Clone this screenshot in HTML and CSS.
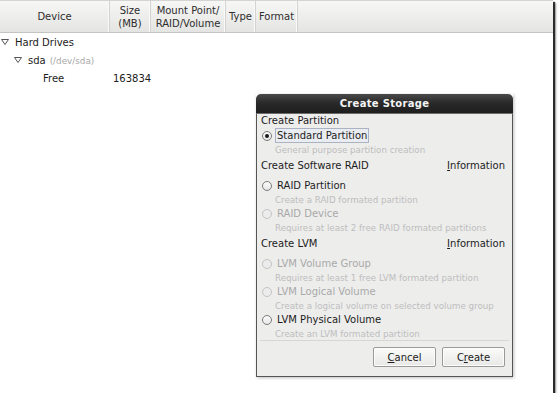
FILE: index.html
```html
<!DOCTYPE html>
<html lang="en">
<head>
    <meta charset="UTF-8">
    <title>Create Storage</title>
    <link rel="stylesheet" href="styles.css">
</head>
<body>
    <div class="frame">
        <div class="header">
            <div class="col col-device">Device</div>
            <div class="col col-size">Size<br>(MB)</div>
            <div class="col col-mount">Mount Point/<br>RAID/Volume</div>
            <div class="col col-type">Type</div>
            <div class="col col-format">Format</div>
            <div class="col col-rest"></div>
        </div>

        <div class="tree">
            <div class="row level-0">
                <svg class="expander" width="8" height="6" viewBox="0 0 8 6"><path d="M0.5 0.5 H7.5 L4 5.5 Z" fill="none" stroke="#555" stroke-width="1"/></svg>
                <span>Hard Drives</span>
            </div>
            <div class="row level-1">
                <svg class="expander" width="8" height="6" viewBox="0 0 8 6"><path d="M0.5 0.5 H7.5 L4 5.5 Z" fill="none" stroke="#555" stroke-width="1"/></svg>
                <span>sda</span>
                <span class="path">(/dev/sda)</span>
            </div>
            <div class="row level-2">
                <span class="cell-name">Free</span>
                <span class="cell-size">163834</span>
            </div>
        </div>

        <div class="dialog">
            <div class="titlebar">Create Storage</div>
            <div class="dialog-body">
                <div class="options">
                    <div class="heading first">Create Partition</div>
                    <div class="option first">
                        <span class="radio checked"></span>
                        <span class="label focused">Standard Partition</span>
                    </div>
                    <div class="desc">General purpose partition creation</div>

                    <div class="heading">
                        <span>Create Software RAID</span>
                        <span class="info"><u>I</u>nformation</span>
                    </div>
                    <div class="option">
                        <span class="radio"></span>
                        <span class="label">RAID Partition</span>
                    </div>
                    <div class="desc">Create a RAID formated partition</div>
                    <div class="option disabled">
                        <span class="radio"></span>
                        <span class="label">RAID Device</span>
                    </div>
                    <div class="desc">Requires at least 2 free RAID formated partitions</div>

                    <div class="heading">
                        <span>Create LVM</span>
                        <span class="info"><u>I</u>nformation</span>
                    </div>
                    <div class="option disabled">
                        <span class="radio"></span>
                        <span class="label">LVM Volume Group</span>
                    </div>
                    <div class="desc">Requires at least 1 free LVM formated partition</div>
                    <div class="option disabled">
                        <span class="radio"></span>
                        <span class="label">LVM Logical Volume</span>
                    </div>
                    <div class="desc">Create a logical volume on selected volume group</div>
                    <div class="option">
                        <span class="radio"></span>
                        <span class="label">LVM Physical Volume</span>
                    </div>
                    <div class="desc">Create an LVM formated partition</div>
                </div>

                <div class="buttons">
                    <button class="btn"><u>C</u>ancel</button>
                    <button class="btn">C<u>r</u>eate</button>
                </div>
            </div>
        </div>
    </div>
</body>
</html>
```

FILE: styles.css
```css
* {
    margin: 0;
    padding: 0;
    box-sizing: border-box;
}

body {
    font-family: 'DejaVu Sans', 'Liberation Sans', sans-serif;
    font-size: 10px;
    color: #1c1c1c;
    background: white;
}

.frame {
    position: relative;
    width: 553px;
    height: 393px;
    background: white;
    border-top: 1px solid #d4d4d4;
    box-shadow: 2px 2px 1px rgba(0,0,0,0.75), 3px 3px 2px rgba(0,0,0,0.35);
}

/* column header */

.header {
    display: flex;
    height: 32px;
    background: linear-gradient(#f7f7f5, #e4e4e2);
    border-bottom: 1px solid #c4c4c2;
}

.col {
    display: flex;
    align-items: center;
    justify-content: center;
    text-align: center;
    line-height: 13px;
    color: #2e2e2e;
    border-right: 1px solid #d2d2d0;
    box-shadow: inset -1px 0 0 #fafafa;
}

.col-device { width: 110px; }
.col-size { width: 41px; }
.col-mount { width: 75px; }
.col-type { width: 30px; }
.col-format { width: 42px; }
.col-rest { flex: 1; border-right: none; box-shadow: none; }

/* tree */

.row {
    display: flex;
    align-items: center;
    height: 18px;
    white-space: nowrap;
}

.expander {
    margin-right: 6px;
}

.level-0 { padding-left: 1px; }
.level-1 { padding-left: 14px; }
.level-1 .path {
    margin-left: 4px;
    font-size: 8.8px;
    color: #a8a8a8;
    padding-top: 2px;
}

.level-2 { padding-left: 43px; }
.cell-name { width: 70px; }

/* dialog */

.dialog {
    position: absolute;
    left: 256px;
    top: 93px;
    width: 257px;
    box-shadow: 1px 1px 3px rgba(0,0,0,0.25);
}

.titlebar {
    height: 20px;
    line-height: 20px;
    text-align: center;
    font-weight: bold;
    color: #f4f4f4;
    letter-spacing: 0.3px;
    background: linear-gradient(#4a4a4a, #2a2a2a 45%, #1e1e1e);
    border-radius: 5px 5px 0 0;
    border-bottom: 1px solid #6a6a6a;
}

.dialog-body {
    background: #ededec;
    border: 1px solid #555;
    border-top: none;
    padding: 0 0 9px;
}

.options {
    margin: 0 3px;
    padding: 0 4px 0 1px;
    border-bottom: 1px solid #d6d6d4;
}

.heading {
    display: flex;
    justify-content: space-between;
    line-height: 14px;
    margin-top: 3px;
}

.heading.first {
    margin-top: 0;
}

.option {
    display: flex;
    align-items: center;
    height: 15px;
    margin-top: 5px;
}

.option.first,
.desc + .option {
    margin-top: 0;
}

.radio {
    width: 10px;
    height: 10px;
    margin-left: 1px;
    border: 1px solid #7c7c7c;
    border-radius: 50%;
    background: linear-gradient(#fbfbfb, #e6e6e6);
    display: flex;
    align-items: center;
    justify-content: center;
}

.radio.checked::after {
    content: "";
    width: 4px;
    height: 4px;
    border-radius: 50%;
    background: #1a1a1a;
}

.label {
    margin-left: 3px;
    padding: 0 1px;
    line-height: 13px;
    border: 1px solid transparent;
}

.label.focused {
    border-color: #aab2c4;
    background: #e9ecf0;
}

.disabled .radio {
    border-color: #c4c4c4;
    background: #ececec;
}

.disabled .label {
    color: #a9a9a9;
}

.desc {
    margin-top: 1px;
    padding-left: 14px;
    line-height: 12px;
    font-size: 8.7px;
    color: #bdbdbd;
    white-space: nowrap;
}

.buttons {
    display: flex;
    justify-content: flex-end;
    gap: 6px;
    padding: 6px 7px 0 0;
}

.btn {
    width: 63px;
    height: 20px;
    font-family: inherit;
    font-size: 10px;
    color: #1c1c1c;
    background: linear-gradient(#fbfbfa, #e8e8e6);
    border: 1px solid #9a9a98;
    border-radius: 2px;
    box-shadow: inset 0 0 0 1px #fdfdfd;
}
```
